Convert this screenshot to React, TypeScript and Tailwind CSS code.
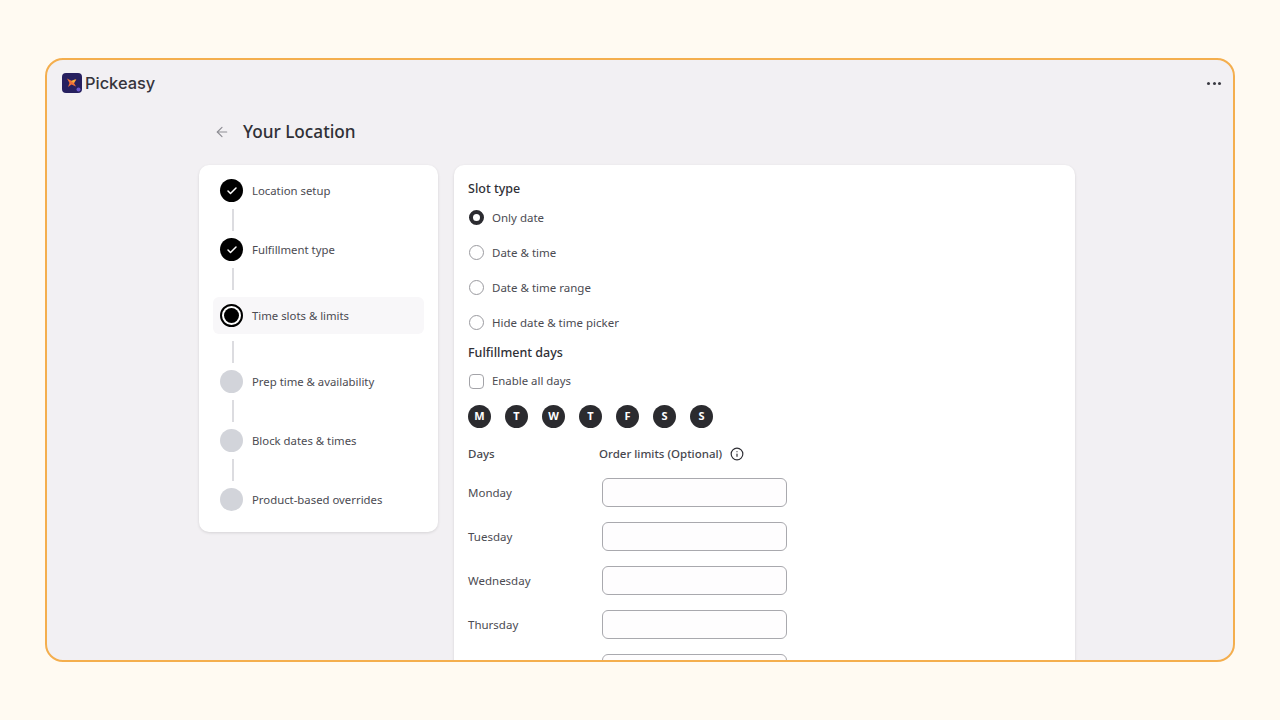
import { ArrowLeft, Check, Info } from 'lucide-react';

const steps = [
  { label: 'Location setup', state: 'done' },
  { label: 'Fulfillment type', state: 'done' },
  { label: 'Time slots & limits', state: 'active' },
  { label: 'Prep time & availability', state: 'todo' },
  { label: 'Block dates & times', state: 'todo' },
  { label: 'Product-based overrides', state: 'todo' },
];

const slotTypes = ['Only date', 'Date & time', 'Date & time range', 'Hide date & time picker'];
const dayLetters = ['M', 'T', 'W', 'T', 'F', 'S', 'S'];
// the fifth row is cut by the frame before its label shows
const days = ['Monday', 'Tuesday', 'Wednesday', 'Thursday', ''];

function Logo() {
  return (
    <svg width="20" height="20" viewBox="0 0 20 20">
      <rect width="20" height="20" rx="4" fill="#27205f" />
      <path d="M5 5.5 L10 8 L14.5 6.5 L12 10 L14 13.5 L9.5 11.5 L6 14 L7.5 10 Z" fill="#f0703a" />
      <path d="M9 8 L14 6 L12 10 Z" fill="#f7b23b" />
      <circle cx="16.5" cy="16.5" r="2" fill="#6d5bd0" />
    </svg>
  );
}

function StepDot({ state }: { state: string }) {
  if (state === 'done') {
    return (
      <div className="flex h-[23px] w-[23px] shrink-0 items-center justify-center rounded-full bg-black">
        <Check size={12} strokeWidth={3} className="text-white" />
      </div>
    );
  }
  if (state === 'active') {
    return (
      <div className="flex h-[23px] w-[23px] shrink-0 items-center justify-center rounded-full border-2 border-black bg-white">
        <div className="h-[15px] w-[15px] rounded-full bg-black" />
      </div>
    );
  }
  return <div className="h-[23px] w-[23px] shrink-0 rounded-full bg-[#d2d4da]" />;
}

export default function App() {
  return (
    <div className="h-[720px] overflow-hidden bg-[#fffaf2] px-[45px] pt-[58px] font-['Noto_Sans',sans-serif]">
      <div className="h-[604px] overflow-hidden rounded-[18px] border-2 border-[#f4ae4e] bg-[#f2f0f3]">
        <div className="flex items-center justify-between pl-[15px] pr-[12px] pt-[12px]">
          <div className="flex items-center gap-[3px]">
            <Logo />
            <span className="font-['Inter',sans-serif] text-[16.4px] font-medium leading-[22px] text-[#36343c]">Pickeasy</span>
          </div>
          <div className="flex gap-[2.5px]">
            <span className="h-[3px] w-[3px] rounded-full bg-[#3a3a42]" />
            <span className="h-[3px] w-[3px] rounded-full bg-[#3a3a42]" />
            <span className="h-[3px] w-[3px] rounded-full bg-[#3a3a42]" />
          </div>
        </div>

        <div className="ml-[152px]">
          <div className="mt-[26px] flex h-[24px] items-center pl-[15px]">
            <ArrowLeft size={16} strokeWidth={1.75} className="text-[#8e8d94]" />
            <h1 className="ml-[13px] text-[17.2px] font-medium text-[#303036]">Your Location</h1>
          </div>

          <div className="mt-[21px] flex items-start gap-[16px]">
            <div className="w-[239px] rounded-[10px] bg-white px-[14px] pb-[21px] pt-[14px] shadow-[0_1px_3px_rgba(0,0,0,0.12)]">
              {steps.map((step, i) => (
                <div key={step.label}>
                  <div
                    className={
                      step.state === 'active'
                        ? 'flex h-[37px] items-center gap-[9px] rounded-[6px] bg-[#f8f7f9] pl-[7px]'
                        : 'flex h-[23px] items-center gap-[9px] pl-[7px]'
                    }
                  >
                    <StepDot state={step.state} />
                    <span className="text-[11.35px] text-[#4b4b52]">{step.label}</span>
                  </div>
                  {i < steps.length - 1 && <div className="my-[7px] ml-[18.5px] h-[22px] w-[2px] bg-[#dcdce0]" />}
                </div>
              ))}
            </div>

            <div className="h-[520px] w-[621px] rounded-[10px] bg-white pl-[14px] pt-[14px] shadow-[0_1px_3px_rgba(0,0,0,0.12)]">
              <h2 className="text-[12.5px] font-medium leading-[20px] text-[#303036]">Slot type</h2>
              <div className="mt-[11px] flex flex-col gap-[19px]">
                {slotTypes.map((slot, i) => (
                  <div key={slot} className="flex h-[16px] items-center gap-[8px] pl-px">
                    <div
                      className={
                        i === 0
                          ? 'h-[15px] w-[15px] self-start rounded-full border-[4px] border-[#2b2b30] bg-white'
                          : 'h-[15px] w-[15px] self-start rounded-full border border-[#9a9a9f] bg-white'
                      }
                    />
                    <span className="text-[11.5px] text-[#4b4b52]">{slot}</span>
                  </div>
                ))}
              </div>

              <h2 className="mt-[12px] text-[12.5px] font-medium leading-[20px] text-[#303036]">Fulfillment days</h2>
              <div className="mt-[10px] flex h-[16px] items-center gap-[8px] pl-px">
                <div className="h-[15px] w-[15px] rounded-[4px] border border-[#a3a3a8] bg-white" />
                <span className="text-[11.4px] text-[#4b4b52]">Enable all days</span>
              </div>

              <div className="mt-[16px] flex gap-[14px]">
                {dayLetters.map((d, i) => (
                  <div
                    key={i}
                    className="flex h-[23px] w-[23px] items-center justify-center rounded-full bg-[#2b2b2f] text-[11px] font-bold text-white"
                  >
                    {d}
                  </div>
                ))}
              </div>

              <div className="mt-[16px] flex h-[20px] items-center text-[11.5px] font-medium text-[#47474e]">
                <span className="w-[131px]">Days</span>
                <span>Order limits (Optional)</span>
                <Info size={14} strokeWidth={2} className="ml-[8px] text-[#2f2f35]" />
              </div>

              <div className="mt-[14px] flex flex-col gap-[15px]">
                {days.map((day, i) => (
                  <div key={i} className="flex h-[29px] items-center">
                    <span className="w-[134px] text-[11.5px] text-[#4b4b52]">{day}</span>
                    <div className="h-[29px] w-[185px] rounded-[6px] border border-[#a9a9ae] bg-[#fefdfe]" />
                  </div>
                ))}
              </div>
            </div>
          </div>
        </div>
      </div>
    </div>
  );
}
